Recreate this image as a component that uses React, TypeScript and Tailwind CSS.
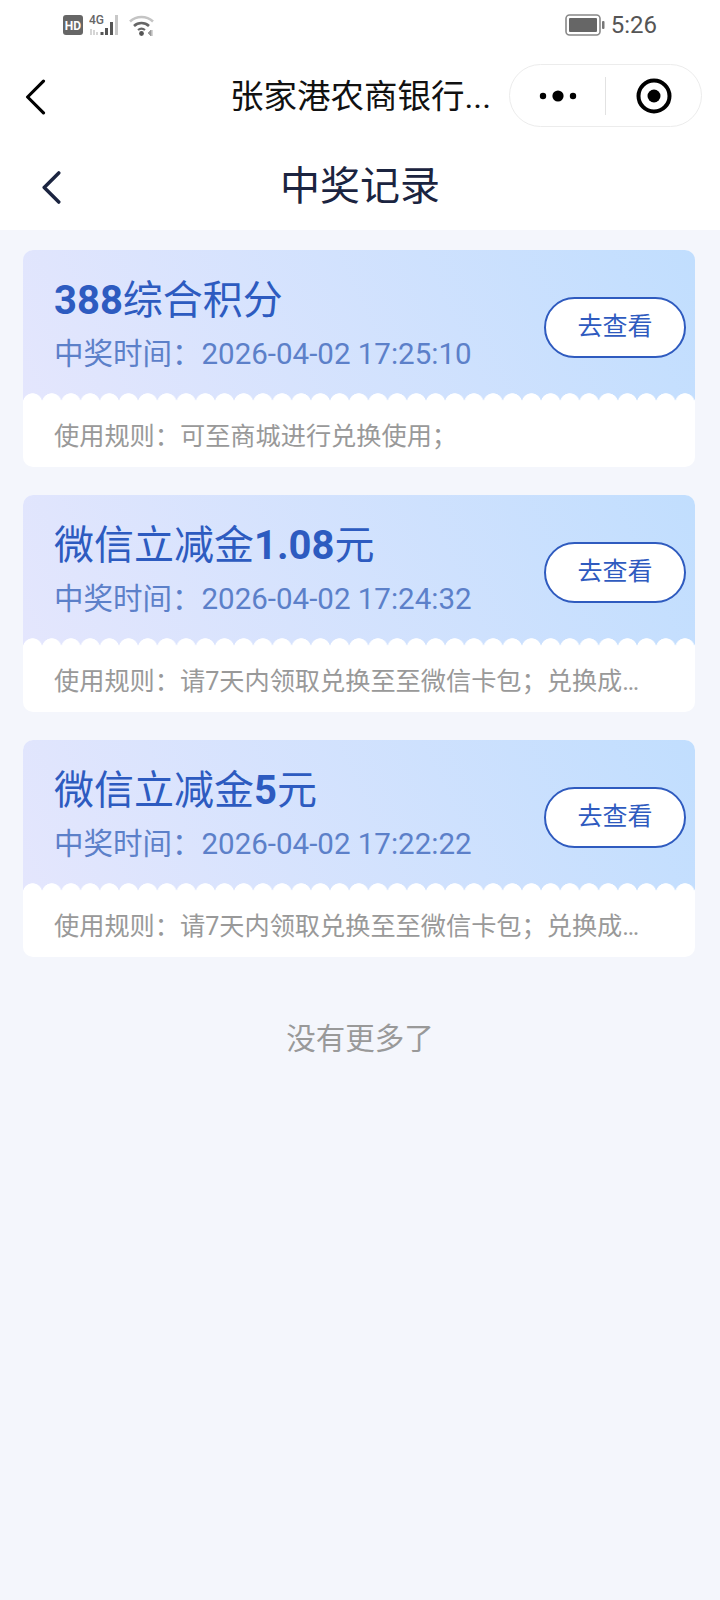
import React from "react";

const records = [
  {
    id: 1,
    title: (
      <>
        <b className="font-bold">388</b>综合积分
      </>
    ),
    time: "2026-04-02 17:25:10",
    rule: "使用规则：可至商城进行兑换使用；",
  },
  {
    id: 2,
    title: (
      <>
        微信立减金<b className="font-bold">1.08</b>元
      </>
    ),
    time: "2026-04-02 17:24:32",
    rule: "使用规则：请7天内领取兑换至至微信卡包；兑换成…",
  },
  {
    id: 3,
    title: (
      <>
        微信立减金<b className="font-bold">5</b>元
      </>
    ),
    time: "2026-04-02 17:22:22",
    rule: "使用规则：请7天内领取兑换至至微信卡包；兑换成…",
  },
];

const StatusLeft = () => (
  <div className="flex items-center gap-[6px] text-[#666]">
    <svg width="20" height="20" viewBox="0 0 20 20">
      <rect width="20" height="20" rx="3" fill="#666" />
      <text x="10" y="14.5" textAnchor="middle" fontSize="12" fontWeight="700" fill="#fff" fontFamily="Roboto, sans-serif">
        HD
      </text>
    </svg>
    <svg width="34" height="22" viewBox="0 0 34 22">
      <text x="0" y="10" fontSize="12" fontWeight="500" fill="#666" fontFamily="Roboto, sans-serif">
        4G
      </text>
      <path d="M2 15v6M5 16v5M8 18v3" stroke="#c4c4c4" strokeWidth="1.4" fill="none" />
      <rect x="11.5" y="18" width="3" height="3" fill="#555" />
      <rect x="16" y="14" width="3" height="7" fill="#555" />
      <rect x="21" y="8" width="3" height="13" fill="#555" />
      <rect x="26" y="1" width="3" height="20" fill="#c8c8c8" />
    </svg>
    <svg width="26" height="22" viewBox="0 0 26 22" fill="none">
      <path d="M1 7.5a17 17 0 0 1 23 0" stroke="#c4c4c4" strokeWidth="2.6" />
      <path d="M5 12a11 11 0 0 1 15 0" stroke="#666" strokeWidth="2.6" />
      <path d="M9 16a5.5 5.5 0 0 1 7 0" stroke="#666" strokeWidth="2.2" />
      <circle cx="12.5" cy="19.5" r="2.4" fill="#555" />
      <path d="M19 19l3-3v6zM23 16v6" stroke="#999" strokeWidth="0.8" fill="#999" />
    </svg>
  </div>
);

const Battery = () => (
  <svg width="40" height="22" viewBox="0 0 40 22" fill="none">
    <rect x="1" y="1" width="34" height="20" rx="3.5" stroke="#888" strokeWidth="1.6" />
    <rect x="4" y="4" width="28" height="14" rx="1" fill="#666" />
    <rect x="37" y="7" width="2.5" height="8" rx="1" fill="#777" />
  </svg>
);

const Capsule = () => (
  <div className="mb-[2px] flex h-[63px] w-[193px] items-center rounded-full border border-[#ececec] bg-white">
    <div className="flex w-[95px] items-center justify-center pl-[1px]">
      <svg width="38" height="14" viewBox="0 0 38 14">
        <circle cx="4" cy="7" r="3.2" fill="#000" />
        <circle cx="19" cy="7" r="5.6" fill="#000" />
        <circle cx="34" cy="7" r="3.2" fill="#000" />
      </svg>
    </div>
    <div className="h-[38px] w-px bg-[#e2e2e2]" />
    <div className="flex flex-1 items-center justify-center">
      <svg width="36" height="36" viewBox="0 0 36 36" fill="none">
        <circle cx="18" cy="18" r="15.5" stroke="#000" strokeWidth="4" />
        <circle cx="18" cy="18" r="6.5" fill="#000" />
      </svg>
    </div>
  </div>
);

const Chevron = ({ color, width, height, stroke }: { color: string; width: number; height: number; stroke: number }) => (
  <svg width={width} height={height} viewBox="0 0 20 34" fill="none">
    <path d="M18 2 3 17l15 15" stroke={color} strokeWidth={stroke} strokeLinecap="round" strokeLinejoin="round" />
  </svg>
);

const RecordCard = ({ title, time, rule }: { title: React.ReactNode; time: string; rule: string }) => (
  <div className="overflow-hidden rounded-[10px] bg-white">
    <div className="bg-[linear-gradient(65deg,#e4e6fd,#c1defe)]">
      <div className="flex h-[143px] items-center justify-between pl-[31px] pr-[9px] pt-[6px]">
        <div>
          <div className="mt-[1px] h-[52px] text-[40px] leading-[52px] text-[#2d5bc0]">{title}</div>
          <div className="mt-[5px] h-[44px] text-[29.5px] leading-[44px] text-[#5c80c9]">中奖时间：{time}</div>
        </div>
        <button className="mt-[5px] h-[61px] w-[142px] rounded-full border-2 border-[#2f5bbf] bg-white text-[25px] text-[#2f5bbf]">
          去查看
        </button>
      </div>
      <div className="h-[10px] bg-[radial-gradient(circle_at_9.6px_10px,#fff_9.4px,transparent_10px)] bg-[length:19.2px_10px] bg-repeat-x" />
    </div>
    <div className="flex h-[64px] items-center pl-[31px] pt-[4px]">
      <p className="whitespace-nowrap text-[25.2px] text-[#999]">{rule}</p>
    </div>
  </div>
);

export default function App() {
  return (
    <div className="flex min-h-[1600px] w-[720px] flex-col bg-[#f4f6fc] font-['Roboto','Noto_Sans_CJK_SC',sans-serif]">
      <div className="bg-white">
        <div className="flex h-[50px] items-center justify-between pl-[63px] pr-[63px]">
          <StatusLeft />
          <div className="flex items-center gap-[6px]">
            <Battery />
            <span className="text-[24px] text-[#555]">5:26</span>
          </div>
        </div>
        <div className="flex h-[93px] items-center pl-[24px] pr-[18px]">
          <Chevron color="#000" width={22} height={36} stroke={3} />
          <div className="ml-[184px] mt-[2px] flex-1 text-[33.5px] text-[#111]">张家港农商银行...</div>
          <Capsule />
        </div>
        <div className="relative flex h-[87px] items-center justify-center">
          <div className="absolute left-[41px] top-[28px]">
            <Chevron color="#1b2440" width={20} height={33} stroke={3.6} />
          </div>
          <h1 className="text-[40px] text-[#1b2440]">中奖记录</h1>
        </div>
      </div>
      <div className="flex flex-col gap-[28px] pl-[23px] pr-[25px] pt-[20px]">
        {records.map((record) => (
          <RecordCard key={record.id} title={record.title} time={record.time} rule={record.rule} />
        ))}
      </div>
      <p className="mt-[60px] text-center text-[29.5px] text-[#999]">没有更多了</p>
    </div>
  );
}
